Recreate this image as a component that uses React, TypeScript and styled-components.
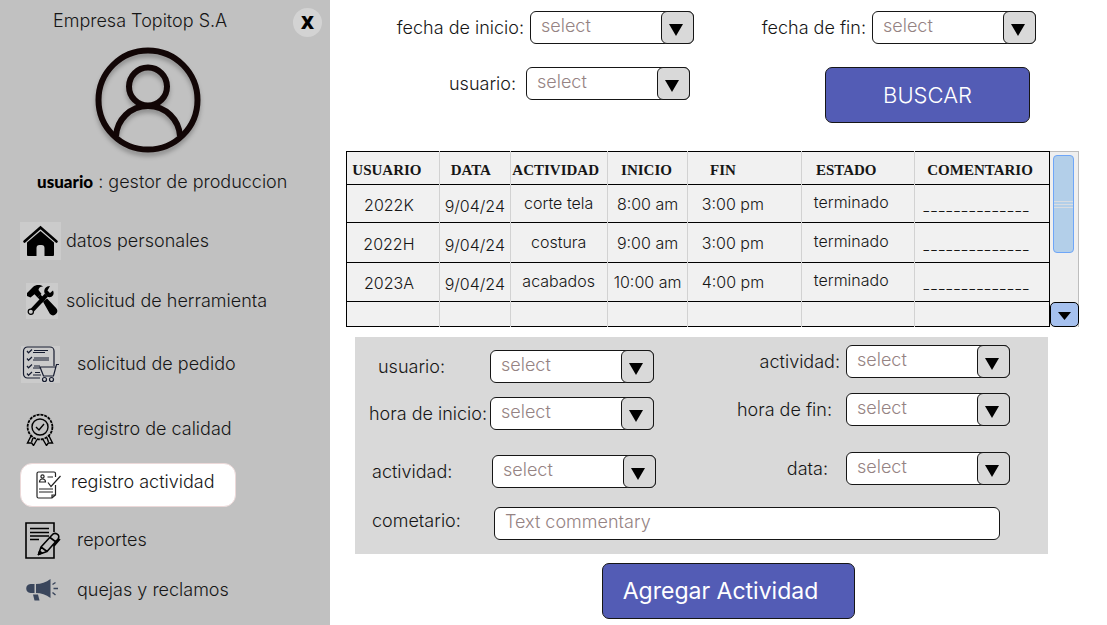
import React from "react";
import styled, { createGlobalStyle } from "styled-components";

const ink = "#161616";
const panel = "#d9d9d9";
const blue = "#535cb5";

const GlobalStyle = createGlobalStyle`
  *, *::before, *::after { box-sizing: border-box; }
  body {
    margin: 0;
    background: #fff;
    color: ${ink};
    font-family: Inter, "Liberation Sans", sans-serif;
    font-weight: 300;
    font-size: 18px;
    line-height: 24px;
  }
`;

const Page = styled.div`
  display: flex;
  min-height: 100vh;
`;

/* ---------- sidebar ---------- */

const Sidebar = styled.aside`
  flex: 0 0 330px;
  background: #c1c1c1;
`;

const Brand = styled.header`
  display: flex;
  align-items: center;
  justify-content: space-between;
  height: 44px;
  padding: 0 8px 0 53px;
`;

const BrandName = styled.h1`
  margin: 0;
  padding-bottom: 2px;
  font-size: 18px;
  font-weight: 300;
`;

const CloseButton = styled.button`
  width: 29px;
  height: 29px;
  margin-top: 1px;
  padding: 0;
  border: 0;
  border-radius: 50%;
  background: #d3d3d3;
  color: #000;
  font: 800 18px/29px "Open Sans", sans-serif;
`;

const Avatar = styled.svg`
  display: block;
  width: 112px;
  height: 116px;
  margin: 2px 0 0 92px;
  filter: drop-shadow(0 4px 2px rgba(0, 0, 0, 0.25));
`;

const Role = styled.p`
  margin: 0;
  padding: 8px 0 0 37px;
  strong {
    color: #000;
    font: 900 17px/24px Lato, sans-serif;
  }
`;

const Nav = styled.nav`
  display: grid;
  grid-template-rows: 60px 60px 66px 64px 48px 62px 38px;
  padding: 17px 0 16px 20px;
`;

const NavLink = styled.a<{ $text: number }>`
  display: grid;
  grid-template-columns: ${(p) => p.$text}px auto;
  align-items: center;
  justify-content: start;
  color: inherit;
  text-decoration: none;
  white-space: nowrap;
`;

const ActiveLink = styled(NavLink)`
  width: 216px;
  height: 44px;
  align-self: center;
  border: 1px solid #ecd9d9;
  border-radius: 12px;
  background: #fff;
  span { padding-bottom: 6px; }
`;

const Icon = styled.svg<{ $left?: number; $tile?: boolean }>`
  display: block;
  margin-left: ${(p) => p.$left ?? 0}px;
  background: ${(p) => (p.$tile ? "#cbcbcb" : "transparent")};
`;

/* ---------- main ---------- */

const Main = styled.main`
  flex: 1;
  min-width: 0;
  display: flex;
  flex-direction: column;
  padding: 11px 28px 6px 16px;
`;

const Filters = styled.form`
  display: grid;
  grid-template-columns: 348fr 342fr;
  row-gap: 23px;
  padding-right: 43px;
  margin-bottom: 28px;
`;

const Field = styled.div<{ $inset?: number }>`
  display: flex;
  justify-content: flex-end;
  align-items: center;
  align-self: start;
  padding-right: ${(p) => p.$inset ?? 0}px;
`;

const Label = styled.label<{ $gap?: number }>`
  padding-right: ${(p) => p.$gap ?? 6}px;
  white-space: nowrap;
`;

const SelectBox = styled.span`
  display: grid;
  flex: none;
  grid-template-columns: 1fr 33px;
  width: 164px;
  height: 33px;
`;

const NativeSelect = styled.select`
  grid-area: 1 / 1 / 2 / 3;
  appearance: none;
  width: 100%;
  padding: 0 40px 4px 10px;
  border: 1px solid ${ink};
  border-radius: 6px;
  background: #fff;
  color: #958383;
  font: inherit;
`;

const ArrowBox = styled.span`
  grid-area: 1 / 2 / 2 / 3;
  z-index: 1;
  display: flex;
  align-items: center;
  justify-content: center;
  padding: 4px 3px 0 0;
  border: 1px solid ${ink};
  border-radius: 6px;
  background: ${panel};
  pointer-events: none;
`;

const PrimaryButton = styled.button<{ $width: number }>`
  width: ${(p) => p.$width}px;
  height: 56px;
  padding: 0;
  border: 1px solid ${ink};
  border-radius: 7px;
  background: ${blue};
  color: #fff;
  font: inherit;
  font-size: 22px;
`;

const AddButton = styled(PrimaryButton)`
  align-self: center;
  margin: 9px 0 0 32px;
  padding-right: 16px;
  font-size: 23px;
  font-weight: 400;
`;

/* ---------- table ---------- */

const TableArea = styled.section`
  display: grid;
  grid-template-columns: 1fr 29px;
`;

const Table = styled.table`
  width: 100%;
  table-layout: fixed;
  border-collapse: collapse;
  border: 1px solid #000;
  background: #f1f1f1;
`;

const Row = styled.tr<{ $height: number }>`
  height: ${(p) => p.$height}px;
  border-bottom: 1px solid #000;
`;

const HeadCell = styled.th<{ $right?: number }>`
  padding: 3px ${(p) => p.$right ?? 0}px 0 0;
  border-right: 1px solid #d2d2d2;
  font: 700 15px/20px "Liberation Serif", serif;
  &:last-child { border-right-color: #000; }
`;

const Cell = styled.td<{ $right?: number; $top?: number; $bottom?: number; $small?: boolean }>`
  padding: ${(p) => p.$top ?? 0}px ${(p) => p.$right ?? 0}px ${(p) => p.$bottom ?? 0}px 0;
  border-right: 1px solid #d2d2d2;
  text-align: center;
  white-space: nowrap;
  font-size: ${(p) => (p.$small ? 12 : 16)}px;
  font-weight: ${(p) => (p.$small ? 400 : 300)};
  &:last-child { border-right-color: #000; }
`;

const ScrollTrack = styled.div`
  display: flex;
  flex-direction: column;
  justify-content: space-between;
  border: 1px solid #bdbdbd;
  border-width: 1px 1px 0 0;
  background: #efefef;
`;

const ScrollThumb = styled.div`
  display: flex;
  flex-direction: column;
  justify-content: center;
  gap: 2px;
  width: 21px;
  height: 98px;
  margin: 3px 0 0 3px;
  border: 1px solid #6ea6f8;
  border-radius: 4px;
  background: #b3cfe9;
  i { height: 1px; background: #d9dde2; }
`;

const ScrollButton = styled.button`
  display: flex;
  align-items: center;
  justify-content: center;
  height: 25px;
  margin-right: -1px;
  padding: 3px 0 0;
  border: 1px solid #000;
  border-radius: 5px;
  background: #a6c1ef;
`;

/* ---------- activity form ---------- */

const ActivityForm = styled.form`
  display: grid;
  grid-template-columns: 301px 1fr;
  margin: 10px 31px 0 9px;
  padding: 8px 38px 14px 0;
  background: ${panel};
`;

const LeftColumn = styled.div`
  display: grid;
  grid-template-rows: 33px 33px 33px;
  row-gap: 14px;
  padding-top: 5px;
`;

const RightColumn = styled.div`
  display: grid;
  grid-template-rows: 33px 33px 33px;
  row-gap: 15px;
`;

const FormRow = styled.div<{ $indent: number; $label: number }>`
  display: grid;
  grid-template-columns: ${(p) => p.$label}px 1fr;
  align-items: center;
  label { padding-left: ${(p) => p.$indent}px; white-space: nowrap; }
`;

const SpacedRow = styled(FormRow)`
  padding-top: 11px;
  height: 44px;
`;

const SpacedField = styled(Field)`
  padding-top: 11px;
`;

const CommentRow = styled(FormRow)`
  grid-column: 1 / 3;
  margin-top: 30px;
  padding-right: 10px;
  label { padding-bottom: 6px; }
`;

const TextInput = styled.input`
  width: 100%;
  height: 33px;
  padding: 0 10px 4px;
  border: 1px solid ${ink};
  border-radius: 6px;
  background: #fff;
  color: ${ink};
  font: inherit;
  &::placeholder { color: #958383; opacity: 1; }
`;

/* ---------- drawings ---------- */

const Triangle = () => (
  <svg width="14" height="12" viewBox="0 0 14 12" aria-hidden="true">
    <path d="M0 0h14L7 12z" fill="#000" />
  </svg>
);

const UserAvatar = () => (
  <Avatar viewBox="0 0 112 116" fill="none" stroke="#120606" strokeWidth="6" aria-label="Foto de usuario">
    <circle cx="56" cy="54" r="49.5" />
    <circle cx="56" cy="40.500" r="19" />
    <path d="M24 90c1-16 14-30 32-30s31 14 32 30" />
  </Avatar>
);

const HomeIcon = () => (
  <Icon $tile width="41" height="38" viewBox="0 0 41 38">
    <path d="M4.500 19.500 20.500 5.500 36.500 19.500" fill="none" stroke="#000" strokeWidth="2.600" strokeLinecap="round" />
    <path d="M7 20.500 20.500 9 34 20.500V33a1 1 0 0 1-1 1h-8.500v-8a3 3 0 0 0-3-3h-2a3 3 0 0 0-3 3v8H8a1 1 0 0 1-1-1z" fill="#000" />
  </Icon>
);

const ToolsIcon = () => (
  <Icon $tile $left={6} width="32" height="36" viewBox="0 0 32 36">
    <path d="M1 10 7 4c3-2.500 7-2.600 10-.5-3 .2-4.500 1.500-4.500 3.500l3 4-4 3.500-3-3.200L4.500 14.500 1 13z" fill="#000" />
    <path d="m13 13 5 5" stroke="#000" strokeWidth="4" />
    <path d="m18 19 3-2.500 8.500 9c3 3.500-1.500 8-5 5z" fill="#000" stroke="#000" strokeWidth="1.500" strokeLinejoin="round" />
    <path d="M5.500 28 20.500 12" stroke="#000" strokeWidth="4.200" />
    <circle cx="4.800" cy="28.800" r="2.600" fill="#cbcbcb" stroke="#000" strokeWidth="1.200" />
    <path d="M24 3c-4 0-6.500 3-5.500 7l3.500 4c4 .8 7-2 5-6.500l-3 2.500-2.500-2.500z" fill="#000" />
  </Icon>
);

const OrderIcon = () => (
  <Icon $tile $left={1} width="39" height="37" viewBox="0 0 39 37" fill="none" stroke="#161c30" strokeWidth="1.200">
    <path d="M19 32H6.500a4 4 0 0 1-4-4V5a4 4 0 0 1 4-4H29a4 4 0 0 1 4 4v15" />
    <path d="m6 5 1.500 1.800L11 3.500M6 12.500l1.500 1.800L11 11M6 20l1.500 1.800 3.500-3.300M6 27.500l1.500 1.800L11 26" />
    <path d="M13 4.500h14M12 6.500h12M13 12h15M12 14h16M13 20h6M12 22h7M14 26.500h5M12 29h8" strokeWidth="1" />
    <path d="M38 18.500h-2.500L32.500 30H22.500L19 21h15.500" />
    <circle cx="23.500" cy="33.500" r="2" />
    <circle cx="30.500" cy="33.500" r="2" />
  </Icon>
);

const AwardIcon = () => (
  <Icon $left={6} width="28" height="33" viewBox="0 0 28 33" fill="none" stroke="#000" strokeWidth="1.400">
    <circle cx="14" cy="14" r="12.400" strokeWidth="1.800" strokeDasharray="3 .9" />
    <circle cx="14" cy="14" r="8" />
    <path d="m10 14 3 3 5-6" />
    <path d="M5 23 1.500 30l4-.2L7.500 32.500l3.500-6M23 23l3.500 7-4-.2-2 2.700-3.500-6M7 25l-1.500 4M21 25l1.500 4" />
  </Icon>
);

const ActivityIcon = () => (
  <Icon $left={15} width="25" height="28" viewBox="0 0 25 28" fill="none" stroke="#222" strokeWidth="1.200">
    <path d="M19.500 14v10l-3.500 3H2.500a1.500 1.500 0 0 1-1.500-1.500v-23A1.500 1.500 0 0 1 2.500 1H18a1.500 1.500 0 0 1 1.500 1.500V6M16 27v-3h3.500" />
    <circle cx="6.500" cy="5.500" r="1.600" />
    <path d="M3.500 11c0-4 6-4 6 0zM11.500 6H17M3 18h14M3 21h14" />
    <path d="m12 11.500 3 4L24.500 5" />
  </Icon>
);

const ReportIcon = () => (
  <Icon $left={5} width="36" height="37" viewBox="0 0 36 37" fill="none" stroke="#000" strokeWidth="1.600">
    <path d="M29 10V1H1v35h28V22" />
    <path d="M5 6.500h19M5 10.500h19M5 14h19M5 17.500h9" strokeWidth="1.500" />
    <path d="m16 25 11-12c3-3.500 9 0 6 4L22 29.500l-8.500 3zM16 25l6 4.500M25 15.500l6 4.500M35 17l-6 7" fill="#c1c1c1" strokeLinejoin="round" />
    <path d="m13 33 1.500-4.500 3 2.500z" fill="#000" strokeWidth="1" />
  </Icon>
);

const HornIcon = () => (
  <Icon $left={6} width="32" height="22" viewBox="0 0 32 22" fill="#3a465c">
    <path d="M8.500 5v9H4.500C-1.200 14-1.200 5 4.500 5zM10 5c5 0 10-1.500 14.500-5v19c-4.500-3.500-9.500-5-14.500-5z" />
    <path d="M7 15.500h5l1.500 6H8.500z" />
    <path d="m26.500 5.500 3-2M27.500 9.500H32M26.500 13.500l3 2.500" stroke="#3a465c" strokeWidth="1.500" />
  </Icon>
);

/* ---------- composed parts ---------- */

const Select = ({ id }: { id: string }) => (
  <SelectBox>
    <NativeSelect id={id} defaultValue="">
      <option value="">select</option>
    </NativeSelect>
    <ArrowBox><Triangle /></ArrowBox>
  </SelectBox>
);

const columns = [
  { name: "USUARIO", width: 93, headRight: 12, right: 8, top: 2 },
  { name: "DATA", width: 71, headRight: 8, top: 4 },
  { name: "ACTIVIDAD", width: 97, headRight: 6, bottom: 2 },
  { name: "INICIO", width: 81, headRight: 2 },
  { name: "FIN", width: 114, headRight: 44, right: 24 },
  { name: "ESTADO", width: 113, headRight: 24, right: 14, bottom: 4 },
  { name: "COMENTARIO", width: 135, headRight: 4, right: 12, top: 6, small: true },
];

const dashes = Array(14).fill("_").join("\u2009");

const rows = [
  { height: 38, cells: ["2022K", "9/04/24", "corte tela", "8:00 am", "3:00 pm", "terminado", dashes] },
  { height: 40, cells: ["2022H", "9/04/24", "costura", "9:00 am", "3:00 pm", "terminado", dashes] },
  { height: 39, cells: ["2023A", "9/04/24", "acabados", "10:00 am", "4:00 pm", "terminado", dashes] },
  { height: 25, cells: ["", "", "", "", "", "", ""] },
];

const total = columns.reduce((sum, c) => sum + c.width, 0);

const ActivityTable = () => (
  <TableArea>
    <Table>
      <colgroup>
        {columns.map((c) => (
          <col key={c.name} style={{ width: `${(c.width / total) * 100}%` }} />
        ))}
      </colgroup>
      <thead>
        <Row $height={33}>
          {columns.map((c) => (
            <HeadCell key={c.name} scope="col" $right={c.headRight}>{c.name}</HeadCell>
          ))}
        </Row>
      </thead>
      <tbody>
        {rows.map((r, i) => (
          <Row key={i} $height={r.height}>
            {r.cells.map((text, j) => (
              <Cell
                key={j}
                $right={columns[j].right}
                $top={text ? columns[j].top : 0}
                $bottom={text ? columns[j].bottom : 0}
                $small={columns[j].small}
              >
                {text}
              </Cell>
            ))}
          </Row>
        ))}
      </tbody>
    </Table>
    <ScrollTrack>
      <ScrollThumb><i /><i /><i /></ScrollThumb>
      <ScrollButton type="button" aria-label="Bajar">
        <svg width="13" height="8" viewBox="0 0 13 8"><path d="M0 0h13L6.500 8z" fill="#000" /></svg>
      </ScrollButton>
    </ScrollTrack>
  </TableArea>
);

export default function App() {
  return (
    <>
      <GlobalStyle />
      <Page>
        <Sidebar>
          <Brand>
            <BrandName>Empresa Topitop S.A</BrandName>
            <CloseButton type="button">X</CloseButton>
          </Brand>
          <UserAvatar />
          <Role><strong>usuario</strong> : gestor de produccion</Role>
          <Nav>
            <NavLink href="#datos" $text={46}><HomeIcon /><span>datos personales</span></NavLink>
            <NavLink href="#herramienta" $text={46}><ToolsIcon /><span>solicitud de herramienta</span></NavLink>
            <NavLink href="#pedido" $text={57}><OrderIcon /><span>solicitud de pedido</span></NavLink>
            <NavLink href="#calidad" $text={57}><AwardIcon /><span>registro de calidad</span></NavLink>
            <ActiveLink href="#actividad" $text={50} aria-current="page"><ActivityIcon /><span>registro actividad</span></ActiveLink>
            <NavLink href="#reportes" $text={57}><ReportIcon /><span>reportes</span></NavLink>
            <NavLink href="#quejas" $text={57}><HornIcon /><span>quejas y reclamos</span></NavLink>
          </Nav>
        </Sidebar>
        <Main>
          <Filters>
            <Field>
              <Label htmlFor="f-inicio">fecha de inicio:</Label>
              <Select id="f-inicio" />
            </Field>
            <Field>
              <Label htmlFor="f-fin">fecha de fin:</Label>
              <Select id="f-fin" />
            </Field>
            <Field $inset={4}>
              <Label htmlFor="f-usuario" $gap={10}>usuario:</Label>
              <Select id="f-usuario" />
            </Field>
            <Field $inset={6}>
              <PrimaryButton type="button" $width={205}>BUSCAR</PrimaryButton>
            </Field>
          </Filters>
          <ActivityTable />
          <ActivityForm>
            <LeftColumn>
              <FormRow $indent={23} $label={135}>
                <label htmlFor="a-usuario">usuario:</label>
                <Select id="a-usuario" />
              </FormRow>
              <FormRow $indent={14} $label={135}>
                <label htmlFor="a-inicio">hora de inicio:</label>
                <Select id="a-inicio" />
              </FormRow>
              <SpacedRow $indent={17} $label={137}>
                <label htmlFor="a-actividad">actividad:</label>
                <Select id="a-actividad" />
              </SpacedRow>
            </LeftColumn>
            <RightColumn>
              <Field>
                <Label htmlFor="a-actividad-fin">actividad:</Label>
                <Select id="a-actividad-fin" />
              </Field>
              <Field>
                <Label htmlFor="a-fin" $gap={14}>hora de fin:</Label>
                <Select id="a-fin" />
              </Field>
              <SpacedField>
                <Label htmlFor="a-data" $gap={18}>data:</Label>
                <Select id="a-data" />
              </SpacedField>
            </RightColumn>
            <CommentRow $indent={17} $label={139}>
              <label htmlFor="a-comentario">cometario:</label>
              <TextInput id="a-comentario" placeholder="Text commentary" />
            </CommentRow>
          </ActivityForm>
          <AddButton type="button" $width={253}>Agregar Actividad</AddButton>
        </Main>
      </Page>
    </>
  );
}
